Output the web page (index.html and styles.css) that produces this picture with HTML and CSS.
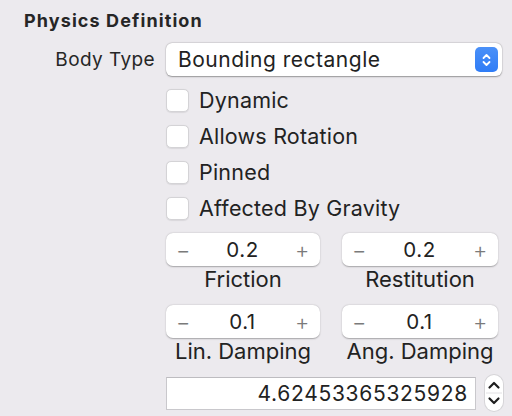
FILE: index.html
```html
<!DOCTYPE html>
<html>
<head>
<meta charset="utf-8">
<link rel="stylesheet" href="styles.css">
</head>
<body>
<div class="panel">
  <h2 class="title">Physics Definition</h2>
  <div class="row">
    <div class="label">Body Type</div>
    <div class="popup">
      <span class="popup-text">Bounding rectangle</span>
      <span class="popup-btn">
        <svg width="11" height="16" viewBox="0 0 11 16"><path d="M2.5 6 L5.5 3 L8.5 6 M2.5 10 L5.5 13 L8.5 10" fill="none" stroke="#fff" stroke-width="1.8" stroke-linecap="round" stroke-linejoin="round"/></svg>
      </span>
    </div>
  </div>
  <div class="checks">
    <label class="check"><span class="box"></span>Dynamic</label>
    <label class="check"><span class="box"></span>Allows Rotation</label>
    <label class="check"><span class="box"></span>Pinned</label>
    <label class="check"><span class="box"></span>Affected By Gravity</label>
  </div>
  <div class="steppers">
    <div class="stepper-cell">
      <div class="stepper"><span class="minus">−</span><span class="val">0.2</span><span class="plus">+</span></div>
      <div class="cap">Friction</div>
    </div>
    <div class="stepper-cell">
      <div class="stepper"><span class="minus">−</span><span class="val">0.2</span><span class="plus">+</span></div>
      <div class="cap">Restitution</div>
    </div>
    <div class="stepper-cell">
      <div class="stepper"><span class="minus">−</span><span class="val">0.1</span><span class="plus">+</span></div>
      <div class="cap">Lin. Damping</div>
    </div>
    <div class="stepper-cell">
      <div class="stepper"><span class="minus">−</span><span class="val">0.1</span><span class="plus">+</span></div>
      <div class="cap">Ang. Damping</div>
    </div>
  </div>
  <div class="field-row">
    <div class="field">4.62453365325928</div>
    <div class="updown">
      <svg width="18" height="36" viewBox="0 0 18 36"><path d="M4.5 12.5 L9 8 L13.5 12.5" fill="none" stroke="#1e1e1e" stroke-width="2.2" stroke-linecap="round" stroke-linejoin="round"/><line x1="1" y1="18" x2="17" y2="18" stroke="#e2e1e4" stroke-width="1"/><path d="M4.5 23.5 L9 28 L13.5 23.5" fill="none" stroke="#1e1e1e" stroke-width="2.2" stroke-linecap="round" stroke-linejoin="round"/></svg>
    </div>
  </div>
  <div class="field-cap">Mass</div>
</div>
</body>
</html>
```

FILE: styles.css
```css
html, body {
  margin: 0;
  padding: 0;
  background: #ECEAEE;
  width: 512px;
  height: 416px;
  overflow: hidden;
}
.panel {
  font-family: "Inter", "Liberation Sans", sans-serif;
  color: #262626;
  padding-top: 8px;
}
.title {
  margin: 0 0 0 24px;
  font-size: 18px;
  letter-spacing: 1.1px;
  font-weight: 700;
  line-height: 26px;
  height: 26px;
  color: #262626;
}
.row {
  display: flex;
  align-items: center;
  margin-top: 9px;
}
.label {
  width: 155px;
  text-align: right;
  font-size: 19px;
  letter-spacing: 0.4px;
  padding-right: 11px;
}
.popup {
  width: 336px;
  height: 33px;
  background: #fff;
  border-radius: 6px;
  box-shadow: 0 0.5px 1.5px rgba(0,0,0,0.35), 0 0 0 0.5px rgba(0,0,0,0.06);
  display: flex;
  align-items: center;
  justify-content: space-between;
  padding: 0 4px 0 12px;
  box-sizing: border-box;
}
.popup-text {
  font-size: 21px;
  letter-spacing: 0.5px;
  color: #222;
}
.popup-btn {
  width: 23px;
  height: 25px;
  border-radius: 5px;
  background: linear-gradient(#4a90f8, #2f7cf6);
  display: flex;
  align-items: center;
  justify-content: center;
}
.checks {
  margin-left: 166px;
  margin-top: 6px;
  display: flex;
  flex-direction: column;
}
.check {
  display: flex;
  align-items: center;
  height: 36px;
  font-size: 21.5px;
  letter-spacing: 0.2px;
  color: #222;
}
.box {
  width: 23px;
  height: 23px;
  box-sizing: border-box;
  border-radius: 5px;
  background: #fff;
  border: 1px solid #d4d3d6;
  box-shadow: 0 0.5px 1px rgba(0,0,0,0.08);
  margin-right: 10px;
}
.steppers {
  margin-left: 166px;
  margin-top: 7px;
  display: grid;
  grid-template-columns: 154px 156px;
  column-gap: 22px;
  row-gap: 13px;
}
.stepper-cell {
  display: flex;
  flex-direction: column;
  align-items: center;
}
.stepper {
  width: 100%;
  height: 33px;
  box-sizing: border-box;
  background: #fff;
  border-radius: 7px;
  box-shadow: 0 0.5px 1.5px rgba(0,0,0,0.3);
  display: flex;
  align-items: center;
  justify-content: space-between;
  padding: 0 11px 0 10px;
}
.minus, .plus {
  color: #7a7a7a;
  font-size: 22px;
  font-weight: 300;
  width: 14px;
  text-align: center;
}
.val {
  font-size: 20.5px;
  letter-spacing: 0.5px;
  color: #222;
}
.cap {
  font-size: 22px;
  line-height: 26px;
  color: #222;
}
.field-row {
  margin-left: 166px;
  margin-top: 11px;
  display: flex;
  align-items: center;
}
.field {
  width: 310px;
  height: 33px;
  box-sizing: border-box;
  background: #fff;
  border: 1px solid #c9c8cc;
  border-top-color: #bdbcc0;
  font-size: 21px;
  letter-spacing: 0.7px;
  color: #222;
  text-align: right;
  line-height: 31px;
  padding-right: 7px;
}
.updown {
  width: 18px;
  height: 36px;
  margin-left: 9px;
  border-radius: 9px;
  background: #fff;
  box-shadow: 0 0 0 1px #d6d5d8;
  display: flex;
}
.field-cap {
  margin-left: 166px;
  width: 310px;
  text-align: center;
  font-size: 22px;
  line-height: 26px;
  margin-top: 1px;
}
```
